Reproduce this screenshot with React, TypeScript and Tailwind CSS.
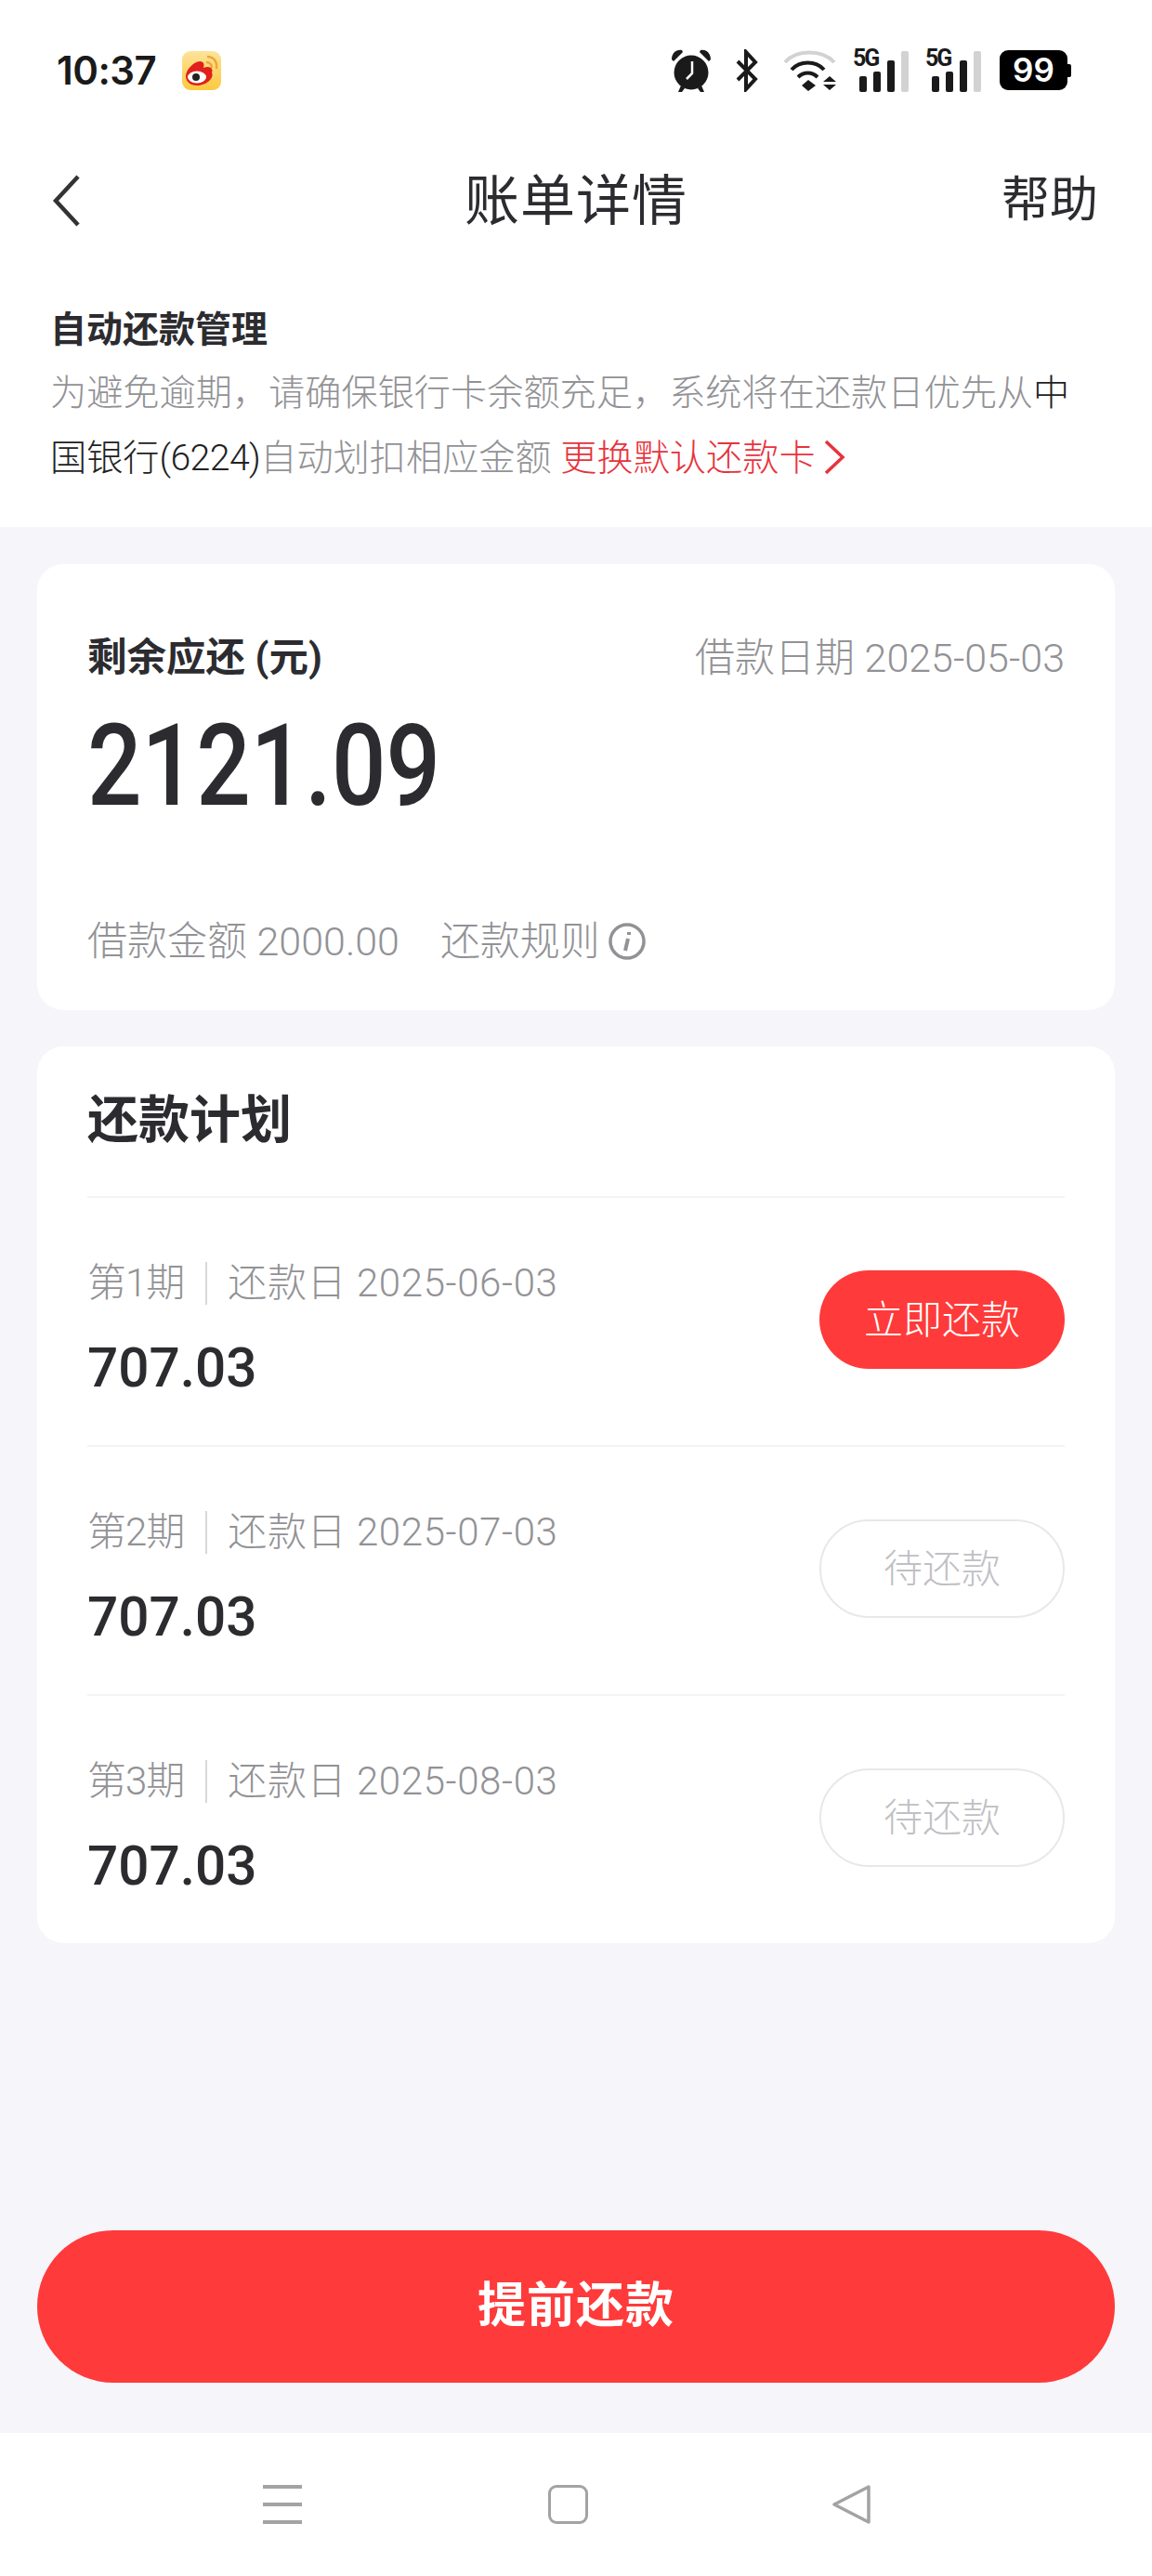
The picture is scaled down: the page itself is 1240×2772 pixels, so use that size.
const font = "font-['Roboto','Noto_Sans_CJK_SC',sans-serif]";

function Alarm() {
  return (
    <svg width="44" height="47" viewBox="0 0 44 47" fill="#1a1a1a">
      <circle cx="22" cy="26" r="18.5" />
      <path d="M1 12 C1 5 6 1 12 2 L13 4 L3 14 Z M43 12 C43 5 38 1 32 2 L31 4 L41 14 Z" />
      <path d="M8 47 L11 40 L15 43 L12 47 Z M36 47 L33 40 L29 43 L32 47 Z" />
      <path d="M23 14 V27 L17 33" fill="none" stroke="#fff" strokeWidth="2.5" />
    </svg>
  );
}

function Signal() {
  return (
    <div className="relative h-[46px] w-[60px]">
      <span className="absolute left-0 top-0 text-[25px] font-bold leading-[20px] tracking-[-2px] text-[#1a1a1a]">5G</span>
      <svg className="absolute left-0 top-0" width="60" height="46" fill="#1a1a1a">
        <rect x="7" y="29" width="8" height="17" rx="2" />
        <rect x="22" y="24" width="8" height="22" rx="2" />
        <rect x="37" y="12" width="8" height="34" rx="2" />
        <rect x="52" y="2" width="8" height="44" rx="2" fill="#d2d2d2" />
      </svg>
    </div>
  );
}

function StatusBar() {
  return (
    <div className="flex h-[155px] items-center pb-[4px] pl-[61px] pr-[87px]">
      <span className="mr-[28px] font-['Inter',sans-serif] text-[42px] font-semibold tracking-[-0.5px] text-[#1a1a1a]">10:37</span>
      <svg width="42" height="42" viewBox="0 0 42 42">
        <defs>
          <linearGradient id="weibo-bg" x1="0" y1="0" x2="0" y2="1">
            <stop offset="0" stopColor="#fde39a" />
            <stop offset="1" stopColor="#fcc93f" />
          </linearGradient>
        </defs>
        <rect width="42" height="42" rx="9" fill="url(#weibo-bg)" />
        <path d="M4 27 C4 20 13 11 19 11 C24 11 24 15 23 18 C30 15 34 19 32 23 C35 30 25 37 16 37 C9 37 4 33 4 27 Z" fill="#e0201c" />
        <ellipse cx="16" cy="28" rx="10" ry="6.5" fill="#fff" />
        <circle cx="15" cy="28" r="4" fill="#222" />
        <path d="M26 12 C30 12 32 15 32 18 M27 6 C34 6 38 11 37 19" fill="none" stroke="#eea63c" strokeWidth="2.5" />
      </svg>
      <div className="ml-auto flex items-center">
        <Alarm />
        <svg className="ml-[26px]" width="24" height="46" viewBox="0 0 24 46" fill="none" stroke="#1a1a1a" strokeWidth="4">
          <path d="M2 13 L21 32 L11 43 V3 L21 14 L2 33" />
        </svg>
        <svg className="ml-[27px]" width="58" height="46" viewBox="0 0 58 46" fill="none">
          <path d="M2 14 C14 0 42 0 55 14" stroke="#d2d2d2" strokeWidth="4" />
          <path d="M9 22 C18 12 35 12 44 22 M16 30 C22 24 31 24 37 30" stroke="#1a1a1a" strokeWidth="4" />
          <path d="M27 33 L35 39 L27 45 L20 39 Z M50 29 L57 35 H43 Z M43 38 H57 L50 44 Z" fill="#1a1a1a" />
        </svg>
        <div className="ml-[17px] flex gap-[18px]">
          <Signal />
          <Signal />
        </div>
        <div className="ml-[20px] flex items-center">
          <div className="flex h-[43px] w-[73px] items-center justify-center rounded-[9px] bg-black font-['Inter',sans-serif] text-[35px] font-semibold text-white">99</div>
          <div className="h-[14px] w-[4px] rounded-r-[2px] bg-black" />
        </div>
      </div>
    </div>
  );
}

function Header() {
  return (
    <div className="relative flex h-[125px] items-center justify-center">
      <svg className="absolute left-[56px] top-[33px]" width="32" height="56" viewBox="0 0 32 56" fill="none" stroke="#333" strokeWidth="4.5">
        <path d="M28 2 L4 28 L28 54" />
      </svg>
      <span className="text-[59px] font-normal tracking-[1px] text-[#2c2c30]">账单详情</span>
      <span className="absolute right-[58px] top-[29px] text-[52px] font-normal leading-[64px] text-[#2c2c30]">帮助</span>
    </div>
  );
}

function AutoRepay() {
  return (
    <div className="bg-white pb-[39px] pl-[54px] pr-[55px] pt-[49px]">
      <div className="text-[39px] font-bold leading-[52px] text-[#2c2c30]">自动还款管理</div>
      <p className="mt-[7px] text-[39.2px] font-light leading-[70px] text-[#929296]">
        为避免逾期，请确保银行卡余额充足，系统将在还款日优先从
        <span className="text-[#222222]">
          中国银行<span className="tracking-[-0.6px]">(6224)</span>
        </span>
        自动划扣相应金额 <span className="text-[#e8323c]">更换默认还款卡</span>
        <svg className="ml-[8px] inline-block align-[-5px]" width="24" height="38" viewBox="0 0 24 38" fill="none" stroke="#e8323c" strokeWidth="3.5">
          <path d="M3 2 L21 19 L3 36" />
        </svg>
      </p>
    </div>
  );
}

function Summary() {
  return (
    <div className="h-[480px] rounded-[28px] bg-white px-[54px] pt-[73px]">
      <div className="flex items-center justify-between">
        <span className="text-[42.5px] font-bold leading-[56px] text-[#2c2c30]">剩余应还 (元)</span>
        <span className="text-[43px] font-light leading-[56px] text-[#929296]">借款日期 2025-05-03</span>
      </div>
      <div className="mt-[23px] origin-left scale-x-[0.838] text-[123px] font-medium leading-[130px] text-[#2c2c30]">2121.09</div>
      <div className="mt-[94px] flex items-center text-[43px] font-light leading-[60px] text-[#929296]">
        <span>借款金额 2000.00</span>
        <span className="ml-[44px]">还款规则</span>
        <svg className="ml-[8px]" width="42" height="42" viewBox="0 0 42 42" fill="none" stroke="#929296" strokeWidth="3.5">
          <circle cx="21" cy="21" r="18" />
          <path d="M22 18 L19 31 M23 11 V14" strokeWidth="4" />
        </svg>
      </div>
    </div>
  );
}

const plans = [
  { no: 1, date: "2025-06-03", active: true },
  { no: 2, date: "2025-07-03", active: false },
  { no: 3, date: "2025-08-03", active: false },
];

function PlanRow({ no, date, active }: { no: number; date: string; active: boolean }) {
  return (
    <div className="flex h-[268px] justify-between border-t-2 border-[#f3f3f6]">
      <div className="pt-[64px]">
        <div className="flex items-center text-[42px] font-light leading-[56px] text-[#929296]">
          <span className="tracking-[-1px]">第{no}期</span>
          <span className="ml-[23px] mr-[22px] h-[46px] w-[2px] bg-[#d8d8dc]" />
          <span className="tracking-[0.6px]">还款日 {date}</span>
        </div>
        <div className="mt-[27px] origin-left scale-x-[0.975] text-[60px] font-medium leading-[72px] text-[#2c2c30]">707.03</div>
      </div>
      {active ? (
        <div className="mb-[4px] flex h-[106px] w-[264px] items-center justify-center self-center rounded-full bg-[#ff3a3a] text-[42px] font-light text-white">立即还款</div>
      ) : (
        <div className="mb-[4px] flex h-[106px] w-[264px] items-center justify-center self-center rounded-full border-2 border-[#e8e8ea] text-[42px] font-light text-[#c0c0c4]">待还款</div>
      )}
    </div>
  );
}

function Plan() {
  return (
    <div className="mt-[39px] rounded-[28px] bg-white px-[54px]">
      <div className="flex h-[161px] items-center pb-[2px] text-[55px] font-bold text-[#2c2c30]">还款计划</div>
      {plans.map((p) => (
        <PlanRow key={p.no} {...p} />
      ))}
    </div>
  );
}

function NavBar() {
  return (
    <div className="flex h-[154px] items-center bg-white pl-[283px]">
      <div className="flex w-[42px] flex-col gap-[15px]">
        <div className="h-[4px] bg-[#a3a3a3]" />
        <div className="h-[4px] bg-[#a3a3a3]" />
        <div className="h-[4px] bg-[#a3a3a3]" />
      </div>
      <div className="ml-[265px] h-[42px] w-[43px] rounded-[9px] border-[3px] border-[#a3a3a3]" />
      <svg className="ml-[263px]" width="41" height="42" viewBox="0 0 41 42" fill="none" stroke="#a3a3a3" strokeWidth="3.5" strokeLinejoin="round">
        <path d="M2 21 L39 2 V40 Z" />
      </svg>
    </div>
  );
}

export default function App() {
  return (
    <div className={`flex h-[2772px] w-[1240px] flex-col bg-[#f5f5fa] ${font}`}>
      <div className="bg-white">
        <StatusBar />
        <Header />
        <AutoRepay />
      </div>
      <div className="flex-1 px-[40px] pt-[40px]">
        <Summary />
        <Plan />
      </div>
      <div className="px-[40px] pb-[54px]">
        <div className="flex h-[164px] items-center justify-center rounded-full bg-[#ff3a3a] text-[52px] font-bold tracking-[1px] text-white">提前还款</div>
      </div>
      <NavBar />
    </div>
  );
}
